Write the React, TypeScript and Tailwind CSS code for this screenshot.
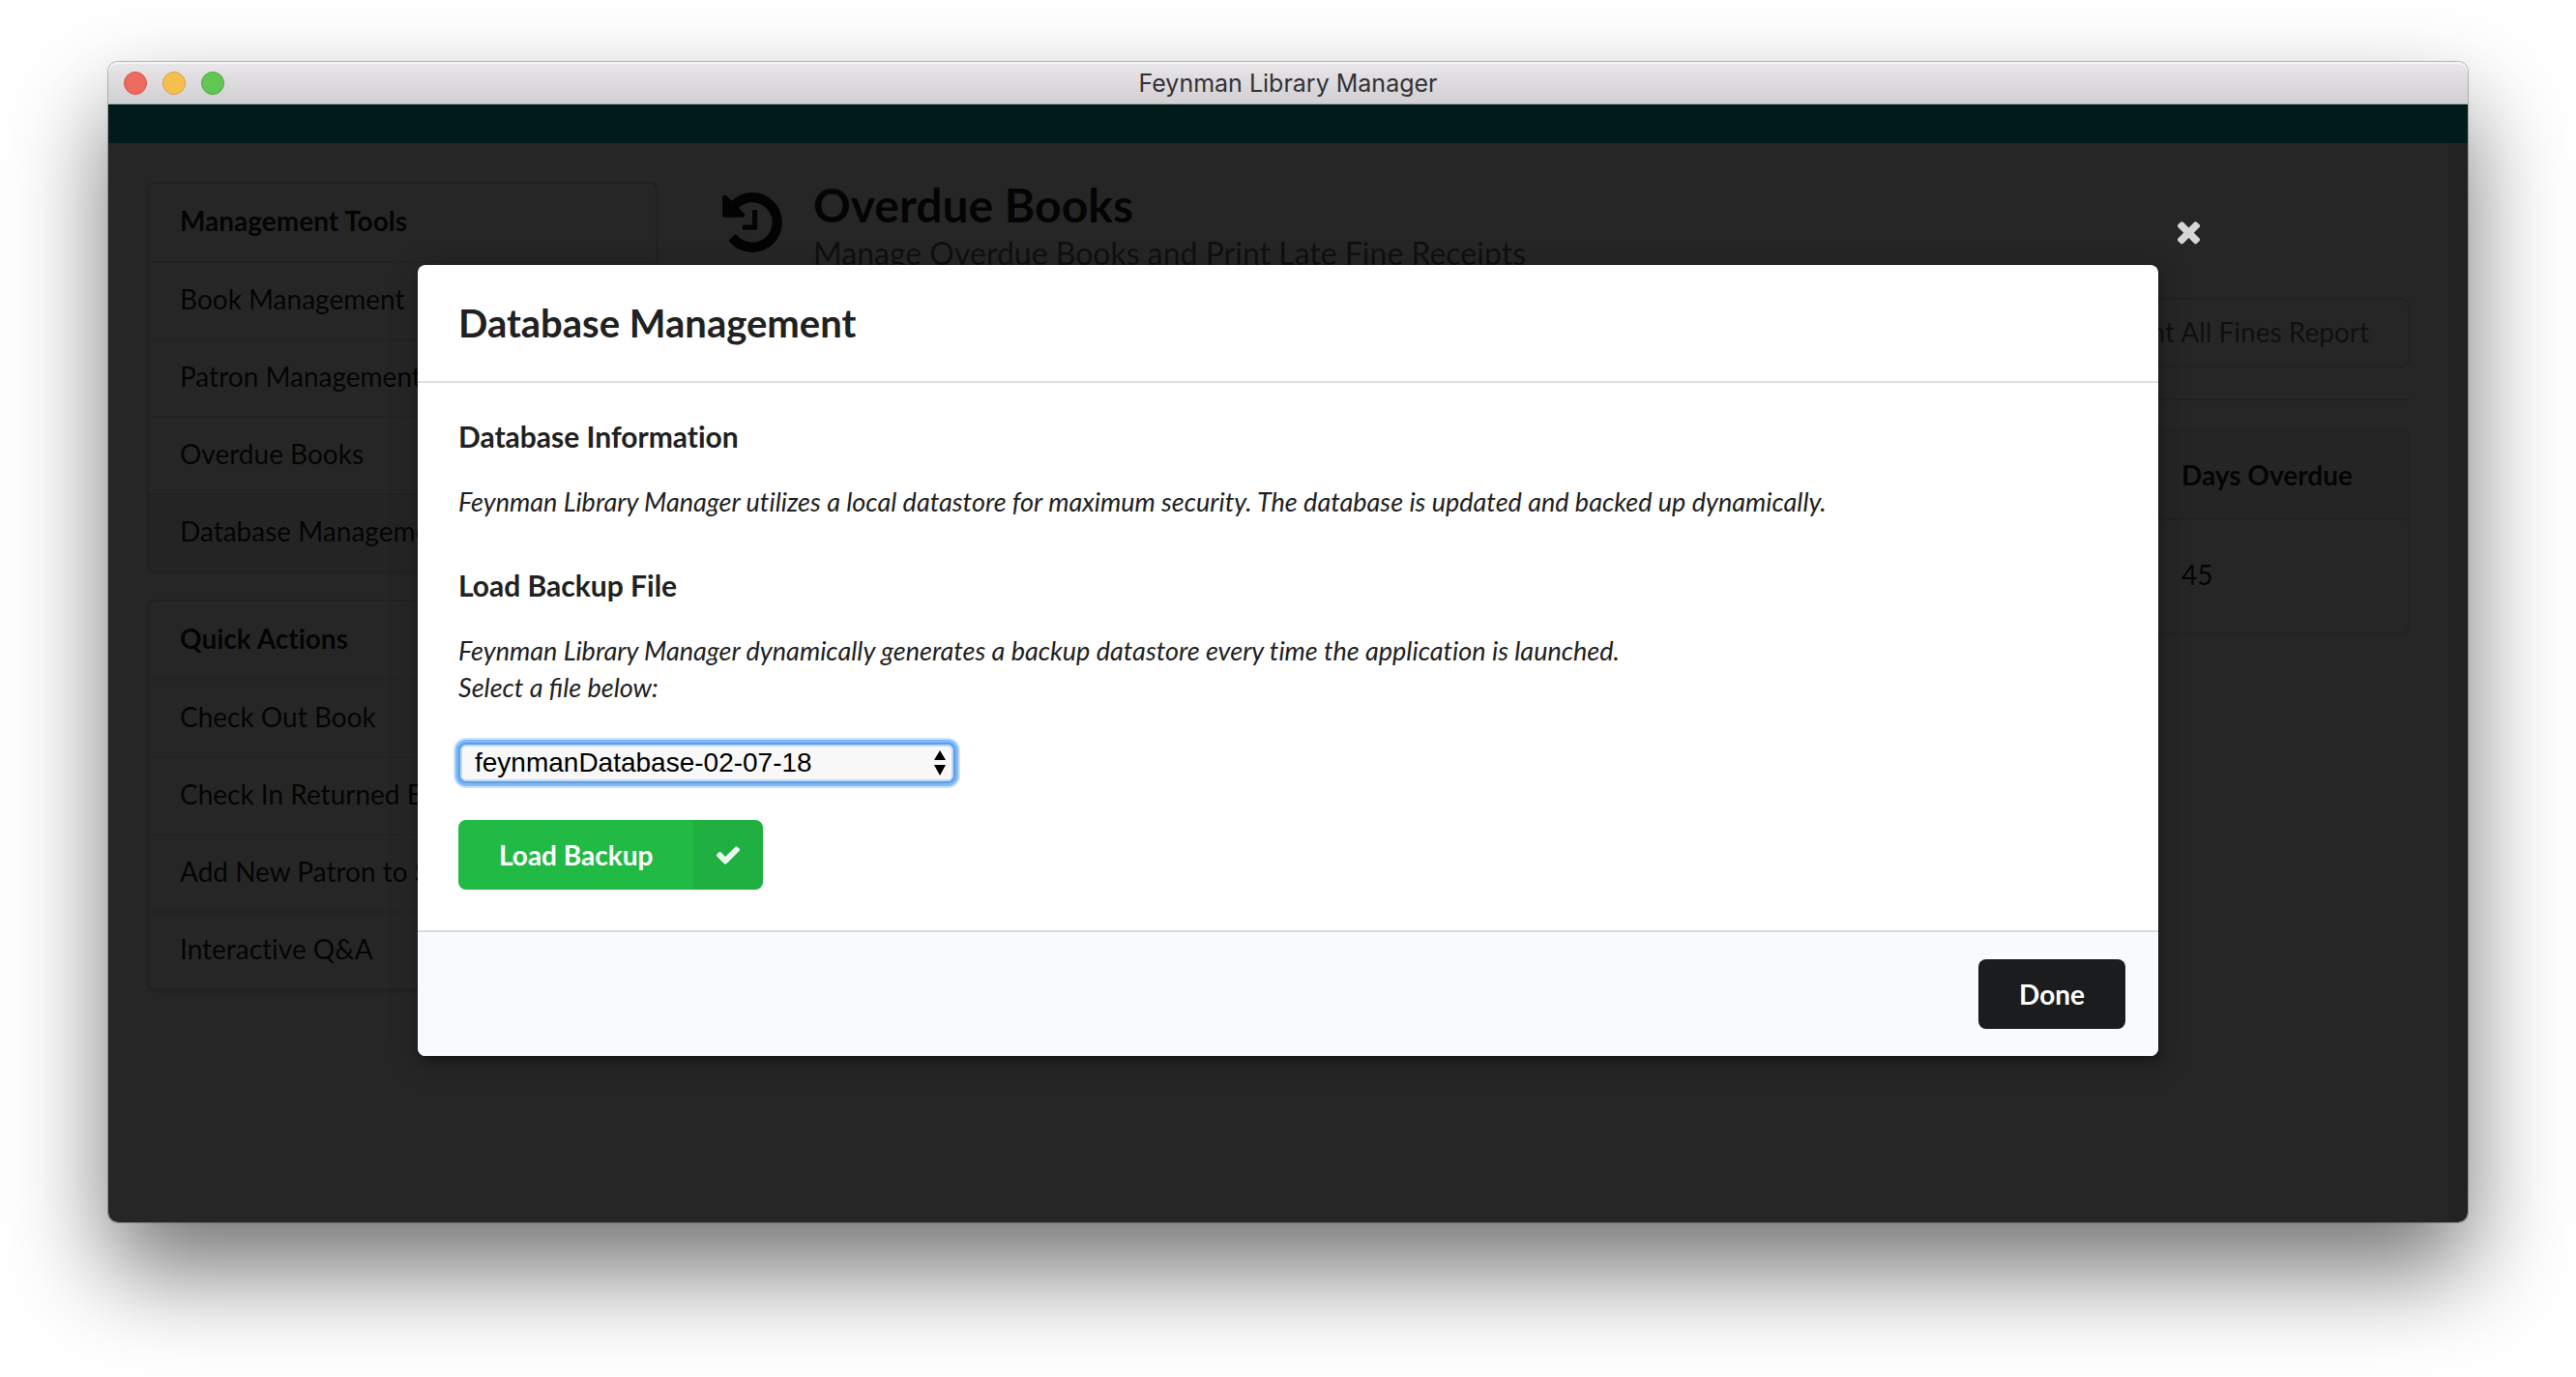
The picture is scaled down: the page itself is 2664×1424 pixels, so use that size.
import React from "react";

const managementTools = [
  { label: "Book Management", active: false },
  { label: "Patron Management", active: false },
  { label: "Overdue Books", active: false },
  { label: "Database Management", active: true },
];

const quickActions = [
  { label: "Check Out Book", active: false },
  { label: "Check In Returned Books", active: false },
  { label: "Add New Patron to System", active: false },
  { label: "Interactive Q&A", active: false },
];

function HistoryIcon() {
  return (
    <svg viewBox="0 128 1536 1536" className="mt-[11px] size-[62px] shrink-0" fill="currentColor" aria-hidden="true">
      <path d="M1536 896q0 156-61 298t-164 245-245 164-298 61q-172 0-327-72.5t-264-204.5q-7-10-6.5-22.5t8.5-20.5l137-138q10-9 25-9 16 2 23 12 73 95 179 147t225 52q104 0 198.500-40.500t163.500-109.500 109.500-163.500 40.500-198.500-40.500-198.500-109.500-163.500-163.500-109.500-198.500-40.500q-98 0-188 35.500t-160 101.500l137 138q31 30 14 69-17 40-59 40h-448q-26 0-45-19t-19-45v-448q0-42 40-59 39-17 69 14l130 129q107-101 244.500-156.500t284.500-55.500q156 0 298 61t245 164 164 245 61 298zm-640-288v448q0 14-9 23t-23 9h-320q-14 0-23-9t-9-23v-64q0-14 9-23t23-9h224v-352q0-14 9-23t23-9h64q14 0 23 9t9 23z" />
    </svg>
  );
}

function CheckIcon() {
  return (
    <svg viewBox="0 0 1792 1792" className="size-7" fill="currentColor" aria-hidden="true">
      <path d="M1671 566q0 40-28 68l-724 724-136 136q-28 28-68 28t-68-28l-136-136-362-362q-28-28-28-68t28-68l136-136q28-28 68-28t68 28l294 295 656-657q28-28 68-28t68 28l136 136q28 28 28 68z" />
    </svg>
  );
}

function CloseIcon() {
  return (
    <svg viewBox="0 0 1792 1792" className="size-[35px]" fill="currentColor" aria-hidden="true">
      <path d="M1490 1322q0 40-28 68l-136 136q-28 28-68 28t-68-28l-294-294-294 294q-28 28-68 28t-68-28l-136-136q-28-28-28-68t28-68l294-294-294-294q-28-28-28-68t28-68l136-136q28-28 68-28t68 28l294 294 294-294q28-28 68-28t68 28l136 136q28 28 28 68t-28 68l-294 294 294 294q28 28 28 68z" />
    </svg>
  );
}

function SideMenu({ title, items }: { title: string; items: { label: string; active: boolean }[] }) {
  return (
    <nav aria-label={title} className="overflow-hidden rounded-lg border-2 border-black/15 bg-white shadow-[0_2px_4px_rgba(0,0,0,0.15)]">
      <h2 className="flex h-20 items-center px-8 pb-1 font-bold">{title}</h2>
      {items.map((item) => (
        <a
          key={item.label}
          href="#"
          className={
            item.active
              ? "flex h-20 items-center border-t-2 border-black/8 bg-black/5 px-8 pb-1"
              : "flex h-20 items-center border-t-2 border-black/8 px-8 pb-1"
          }
        >
          {item.label}
        </a>
      ))}
    </nav>
  );
}

function TitleBar() {
  return (
    <header className="grid h-11 grid-cols-[1fr_auto_1fr] items-center rounded-t-[10px] border-b border-[#b0aeb0] bg-linear-to-b from-[#e9e7ea] to-[#d1cfd2] px-4 shadow-[inset_0_2px_0_#f6f5f6]">
      <div className="flex gap-4">
        <button type="button" aria-label="Close window" className="size-6 rounded-full border border-[#d8574d] bg-[#ee6a5f]" />
        <button type="button" aria-label="Minimize window" className="size-6 rounded-full border border-[#d9a23f] bg-[#f5bf4f]" />
        <button type="button" aria-label="Zoom window" className="size-6 rounded-full border border-[#4fa73f] bg-[#61c654]" />
      </div>
      <h1 className="font-[Inter,sans-serif] text-[25px] leading-8 text-[#343235]">Feynman Library Manager</h1>
    </header>
  );
}

function DatabaseModal() {
  return (
    <section
      role="dialog"
      aria-modal="true"
      aria-labelledby="modal-title"
      className="relative w-full max-w-[1800px] rounded-lg bg-white text-[#212121] shadow-[2px_6px_6px_rgba(0,0,0,0.2),2px_6px_30px_4px_rgba(0,0,0,0.2)]"
    >
      <button type="button" aria-label="Close" className="absolute -top-13 -right-[49px] text-[#d6d6d6]">
        <CloseIcon />
      </button>
      <h2 id="modal-title" className="border-b-2 border-[#dededf] px-[42px] py-[35px] text-[40px] leading-[50px] font-bold">
        Database Management
      </h2>
      <div className="px-[42px] pt-9 pb-[42px]">
        <h3 className="text-[30px] leading-[38px] font-bold">Database Information</h3>
        <p className="mt-[30px] text-[27px] leading-[38px] italic">
          Feynman Library Manager utilizes a local datastore for maximum security. The database is updated and backed up
          dynamically.
        </p>
        <h3 className="mt-12 text-[30px] leading-[38px] font-bold">
          <label htmlFor="backup-file">Load Backup File</label>
        </h3>
        <p className="mt-[30px] text-[27px] leading-[38px] italic">
          Feynman Library Manager dynamically generates a backup datastore every time the application is launched.
          <br />
          <span className="[font-variant-ligatures:normal]">Select a file below:</span>
        </p>
        <div className="relative mt-[38px] w-[514px]">
          <select
            id="backup-file"
            className="block h-[42px] w-full appearance-none rounded-lg border-2 border-[#5f9de0] bg-[#f8f8f8] pl-[15px] font-['Liberation_Sans',Arial,sans-serif] text-[28px] leading-9 text-black shadow-[0_0_0_3px_#7db9fb,0_0_0_5px_#cbe2fd,inset_0_0_0_2px_#bcd9f8] outline-none"
          >
            <option>feynmanDatabase-02-07-18</option>
          </select>
          <svg viewBox="0 0 12 26" className="pointer-events-none absolute top-2 right-[10px] h-[26px] w-3" aria-hidden="true">
            <path d="M6 0l6 10H0zM6 26L0 15h12z" />
          </svg>
        </div>
        <button type="button" className="mt-[38px] flex h-[72px] overflow-hidden rounded-lg bg-[#21ba45] font-bold text-white">
          <span className="flex h-full items-center px-[42px]">Load Backup</span>
          <span className="flex h-full w-[72px] items-center justify-center bg-black/5 text-white/90">
            <CheckIcon />
          </span>
        </button>
      </div>
      <footer className="flex justify-end rounded-b-lg border-t-2 border-[#d9dadb] bg-[#f9fafb] py-7 pr-[34px]">
        <button type="button" className="h-[72px] rounded-lg bg-[#1b1c1d] px-[42px] font-bold text-white">
          Done
        </button>
      </footer>
    </section>
  );
}

export default function App() {
  return (
    <div className="flex min-h-screen bg-white px-28 pt-16 pb-40 font-[Lato,sans-serif] text-[28px] leading-[38px] text-black/90 [font-variant-ligatures:none]">
      <div className="flex flex-1 flex-col rounded-[10px] shadow-[0_0_0_1px_rgba(0,0,0,0.25),0_50px_100px_rgba(0,0,0,0.55)]">
        <TitleBar />
        <div className="relative flex flex-1 flex-col overflow-hidden rounded-b-[10px]">
          <div className="h-10 bg-[#00b5ad]" />
          <div className="flex flex-1 bg-white">
            <div className="flex flex-1 items-start gap-[67px] px-10 pt-10">
              <div className="flex w-[528px] shrink-0 flex-col gap-7">
                <SideMenu title="Management Tools" items={managementTools} />
                <SideMenu title="Quick Actions" items={quickActions} />
              </div>
              <main className="flex min-w-0 flex-1 flex-col">
                <div className="flex items-start gap-8">
                  <HistoryIcon />
                  <div>
                    <h2 className="text-[48px] leading-[48px] font-bold">Overdue Books</h2>
                    <p className="text-[32px] leading-[52px] text-black/60">Manage Overdue Books and Print Late Fine Receipts</p>
                  </div>
                </div>
                <button type="button" className="mt-5 h-[72px] self-end rounded-lg border-2 border-black/15 px-10 pb-0.5 text-black/60">
                  Print All Fines Report
                </button>
                <hr className="mt-8 border-t-2 border-black/15" />
                <div className="mt-[30px] rounded-lg border-2 border-black/10">
                  <table className="w-full table-fixed text-left">
                    <thead>
                      <tr className="h-[91px] border-b-2 border-black/10 bg-[#f8f8f8]">
                        <th />
                        <th className="w-[256px] px-[22px] font-bold">Days Overdue</th>
                      </tr>
                    </thead>
                    <tbody>
                      <tr className="h-[117px]">
                        <td />
                        <td className="px-[22px] pb-1">45</td>
                      </tr>
                    </tbody>
                  </table>
                </div>
              </main>
            </div>
            <div className="w-5 bg-[#e2e2e2]" />
          </div>
          <div className="absolute inset-0 flex items-start justify-center bg-black/85 px-10 pt-[166px]">
            <DatabaseModal />
          </div>
        </div>
      </div>
    </div>
  );
}
